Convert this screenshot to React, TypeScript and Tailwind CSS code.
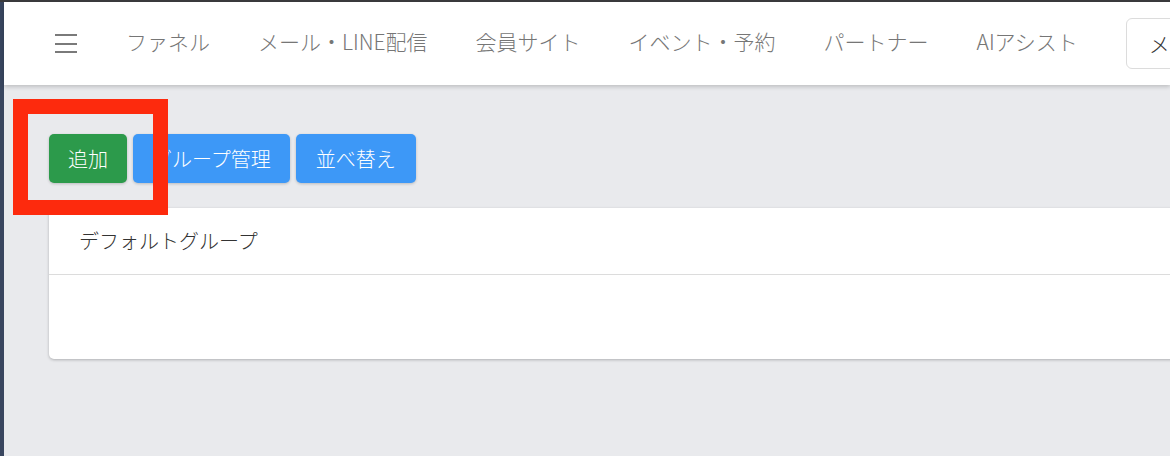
import React from "react";

const navItems = ["ファネル", "メール・LINE配信", "会員サイト", "イベント・予約", "パートナー", "AIアシスト"];

export default function App() {
  return (
    <div
      className="w-[1170px] h-[456px] overflow-hidden flex flex-col bg-[#e9eaed] font-light"
      style={{ fontFamily: '"Noto Sans CJK JP", "Noto Sans", sans-serif' }}
    >
      <div className="h-[2px] bg-[#3b3b3d] shrink-0" />
      <div className="flex flex-1 min-h-0 relative">
        <div className="w-[4px] bg-[#39465f] shrink-0" />
        <div className="flex-1 min-w-0 flex flex-col">
          {/* top navigation */}
          <header className="h-[83px] shrink-0 bg-white flex items-center pl-[51px] shadow-[0_2px_4px_rgba(0,0,0,0.18)] relative z-10 overflow-hidden">
            <div className="w-[22px] shrink-0 flex flex-col gap-[6.5px] mr-[49px]">
              <span className="block h-[2px] bg-[#7a7a7a]" />
              <span className="block h-[2px] bg-[#7a7a7a]" />
              <span className="block h-[2px] bg-[#7a7a7a]" />
            </div>
            <nav className="flex shrink-0 items-center gap-[48px] mb-[3px] text-[21px] text-[#767676] whitespace-nowrap">
              {navItems.map((item) => (
                <span key={item}>{item}</span>
              ))}
            </nav>
            <div className="ml-[48px] h-[51px] w-[120px] shrink-0 border border-[#dcdcdc] rounded-[6px] flex items-center pl-[22px] text-[21px] text-[#333] whitespace-nowrap overflow-hidden">
              メ
            </div>
          </header>

          <main className="pl-[45px] pt-[49px] flex-1">
            <div className="flex gap-[6px] text-[20px] text-white">
              <button className="h-[49px] px-[19px] rounded-[5px] bg-[#2c9a4b] shadow-[0_1px_3px_rgba(0,0,0,0.2)]">
                追加
              </button>
              <button className="h-[49px] px-[19px] rounded-[5px] bg-[#3d98f7] shadow-[0_1px_3px_rgba(0,0,0,0.2)]">
                グループ管理
              </button>
              <button className="h-[49px] px-[20px] rounded-[5px] bg-[#3d98f7] shadow-[0_1px_3px_rgba(0,0,0,0.2)]">
                並べ替え
              </button>
            </div>

            <div className="mt-[25px] w-[1160px] bg-white rounded-[5px] shadow-[0_1px_3px_rgba(0,0,0,0.25)]">
              <div className="h-[67px] flex items-center pl-[30px] text-[20px] text-[#333] border-b border-[#dcdcdc]">
                デフォルトグループ
              </div>
              <div className="h-[84px]" />
            </div>
          </main>
        </div>

        {/* red highlight frame */}
        <div className="absolute left-[13px] top-[97px] w-[155px] h-[116px] border-[15px] border-[#fd2a0d] z-20" />
      </div>
    </div>
  );
}
